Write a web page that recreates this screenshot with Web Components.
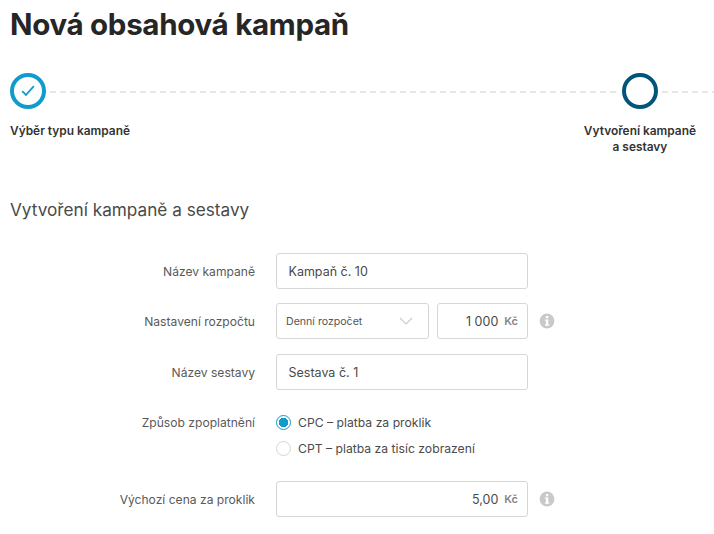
<!DOCTYPE html>
<html lang="cs">
<head>
<meta charset="utf-8">
<title>Nová obsahová kampaň</title>
<style>
html, body { margin: 0; background: #fff; overflow: hidden; }
body { font-family: Inter, "Liberation Sans", sans-serif; color: #333; }
</style>
</head>
<body>
<campaign-page>
  <span slot="title">Nová obsahová kampaň</span>
  <step-bar slot="steps"></step-bar>
  <span slot="section">Vytvoření kampaně a sestavy</span>

  <form-row slot="rows" label="Název kampaně"><text-box value="Kampaň č. 10"></text-box></form-row>
  <form-row slot="rows" label="Nastavení rozpočtu" info gap="14">
    <select-box value="Denní rozpočet"></select-box>
    <money-box value="1 000" width="91"></money-box>
  </form-row>
  <form-row slot="rows" label="Název sestavy" gap="15"><text-box value="Sestava č. 1"></text-box></form-row>
  <form-row slot="rows" label="Způsob zpoplatnění" gap="22" top>
    <radio-list>
      <radio-item checked>CPC – platba za proklik</radio-item>
      <radio-item>CPT – platba za tisíc zobrazení</radio-item>
    </radio-list>
  </form-row>
  <form-row slot="rows" label="Výchozí cena za proklik" info gap="23">
    <money-box value="5,00" width="252"></money-box>
  </form-row>
</campaign-page>

<script>
//Page frame: title, steps, section heading and the form rows
class CampaignPage extends HTMLElement {
  constructor() {
    super();
    this.attachShadow({ mode: "open" });
    this.shadowRoot.innerHTML = `
<style>
:host { display: block; padding: 6px 0 0 10px; }
h1 { margin: 0; font-size: 29.5px; line-height: 36px; font-weight: 700; color: #262626; letter-spacing: -0.3px; }
h2 { margin: 43px 0 31px 0; font-size: 17.2px; line-height: 24px; font-weight: 400; color: #4a4a4a; }
.rows { display: flex; flex-direction: column; }
</style>
<h1><slot name="title"></slot></h1>
<slot name="steps"></slot>
<h2><slot name="section"></slot></h2>
<div class="rows"><slot name="rows"></slot></div>`;
  }
}

//Two step progress bar with dashed connectors
class StepBar extends HTMLElement {
  constructor() {
    super();
    this.attachShadow({ mode: "open" });
    this.shadowRoot.innerHTML = `
<style>
:host { display: block; margin-top: 31px; }
.track { display: flex; align-items: center; height: 36px; }
.dot { flex: none; width: 36px; height: 36px; box-sizing: border-box; border-radius: 50%; border: 4px solid #0f9bcb; display: flex; align-items: center; justify-content: center; }
.dot.current { border-color: #02557a; }
.dash { flex: 1; height: 2px; margin: 2px 4px 0; background: repeating-linear-gradient(90deg, #e6e6e6 0 6px, transparent 6px 10px); }
.dash.end { flex: none; width: 52px; margin-right: 0; }
.labels { display: flex; justify-content: space-between; align-items: flex-start; margin-top: 14px; padding-right: 18px; font-size: 11.9px; line-height: 16px; font-weight: 600; color: #333; }
.labels div:last-child { text-align: center; }
</style>
<div class="track">
  <div class="dot"><svg width="14" height="12" viewBox="0 0 14 12"><path d="M1.2 6.2 L5 10 L12.8 1.2" fill="none" stroke="#0f9bcb" stroke-width="1.8"/></svg></div>
  <div class="dash"></div>
  <div class="dot current"></div>
  <div class="dash end"></div>
</div>
<div class="labels"><div>Výběr typu kampaně</div><div>Vytvoření kampaně<br>a sestavy</div></div>`;
  }
}

//Label on the left, control(s) and an optional info mark on the right
class FormRow extends HTMLElement {
  constructor() {
    super();
    this.attachShadow({ mode: "open" });
    const info = this.hasAttribute("info")
      ? `<svg class="info" width="16" height="16" viewBox="0 0 16 16"><circle cx="8" cy="8" r="7.4" fill="#c9c9c9"/><rect x="6.9" y="3" width="2.4" height="2.3" fill="#fff"/><path d="M5.9 6.5h3.4v5h1v1.2H5.9v-1.2h1V7.7h-1z" fill="#fff"/></svg>`
      : "";
    this.shadowRoot.innerHTML = `
<style>
:host { display: grid; grid-template-columns: 245px auto; column-gap: 21px; align-items: center; justify-content: start; font-size: 12.1px; }
:host([top]) { align-items: start; }
:host([top]) .label { margin-top: 3px; }
.label { text-align: right; color: #5a5a5a; }
.controls { display: flex; align-items: center; gap: 8px; width: 252px; position: relative; }
.info { position: absolute; left: 263px; top: 10px; }
</style>
<div class="label"></div>
<div class="controls"><slot></slot>${info}</div>`;
    this.shadowRoot.querySelector(".label").textContent = this.getAttribute("label");
    this.style.marginTop = (this.getAttribute("gap") || 0) + "px";
  }
}

//Plain text field
class TextBox extends HTMLElement {
  constructor() {
    super();
    this.attachShadow({ mode: "open" });
    this.shadowRoot.innerHTML = `
<style>
:host { display: flex; align-items: center; box-sizing: border-box; width: 252px; height: 36px; padding: 0 11.5px; border: 1px solid #d6d6d6; border-radius: 3px; font-size: 12.5px; color: #4a4a4a; }
</style><span></span>`;
    this.shadowRoot.querySelector("span").textContent = this.getAttribute("value");
  }
}

//Dropdown look, text and chevron
class SelectBox extends HTMLElement {
  constructor() {
    super();
    this.attachShadow({ mode: "open" });
    this.shadowRoot.innerHTML = `
<style>
:host { display: flex; align-items: center; justify-content: space-between; box-sizing: border-box; width: 153px; height: 36px; padding: 0 15px 0 9px; border: 1px solid #d6d6d6; border-radius: 3px; font-size: 10.6px; color: #555; }
</style><span></span>
<svg width="14" height="8" viewBox="0 0 14 8"><path d="M1 1 L7 7 L13 1" fill="none" stroke="#ccc" stroke-width="1.2"/></svg>`;
    this.shadowRoot.querySelector("span").textContent = this.getAttribute("value");
  }
}

//Right aligned amount with currency
class MoneyBox extends HTMLElement {
  constructor() {
    super();
    this.attachShadow({ mode: "open" });
    this.shadowRoot.innerHTML = `
<style>
:host { display: flex; align-items: center; justify-content: flex-end; gap: 6px; box-sizing: border-box; height: 36px; padding: 0 9px; border: 1px solid #d6d6d6; border-radius: 3px; font-size: 12.5px; color: #4a4a4a; }
b { font-size: 11px; font-weight: 600; color: #858585; }
</style><span></span><b>Kč</b>`;
    this.shadowRoot.querySelector("span").textContent = this.getAttribute("value");
    this.style.width = this.getAttribute("width") + "px";
  }
}

class RadioList extends HTMLElement {
  constructor() {
    super();
    this.attachShadow({ mode: "open" });
    this.shadowRoot.innerHTML = `
<style>
:host { display: flex; flex-direction: column; gap: 6px; }
</style><slot></slot>`;
  }
}

class RadioItem extends HTMLElement {
  constructor() {
    super();
    this.attachShadow({ mode: "open" });
    this.shadowRoot.innerHTML = `
<style>
:host { display: flex; align-items: center; gap: 7px; height: 20px; font-size: 12.2px; color: #4a4a4a; }
.mark { flex: none; box-sizing: border-box; width: 15px; height: 15px; border-radius: 50%; border: 1px solid #d6d6d6; }
:host([checked]) .mark { border-color: #0f9bcb; background: radial-gradient(circle, #0f9bcb 0 4.5px, #fff 5px); }
</style><span class="mark"></span><span><slot></slot></span>`;
  }
}

customElements.define("campaign-page", CampaignPage);
customElements.define("step-bar", StepBar);
customElements.define("form-row", FormRow);
customElements.define("text-box", TextBox);
customElements.define("select-box", SelectBox);
customElements.define("money-box", MoneyBox);
customElements.define("radio-list", RadioList);
customElements.define("radio-item", RadioItem);
</script>
</body>
</html>
